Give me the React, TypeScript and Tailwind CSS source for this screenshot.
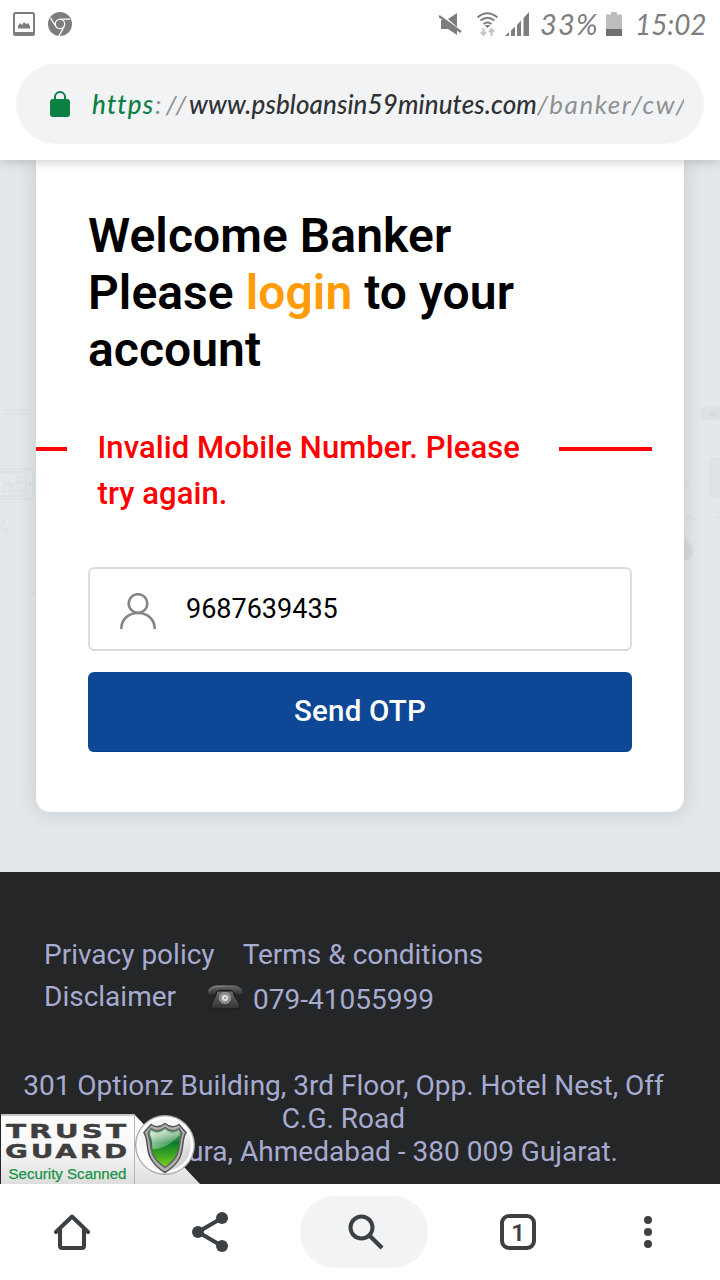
const roboto = "font-['Roboto',sans-serif]";

function StatusBar() {
  return (
    <div className="flex h-12 shrink-0 items-center pl-[13px] text-[#7d7d7d]">
      <svg className="h-6 w-[22px]" viewBox="0 0 22 24" fill="none">
        <rect x="1" y="1" width="20" height="22" rx="1.5" stroke="currentColor" strokeWidth="2" />
        <path d="M2 21.5h18" stroke="currentColor" strokeWidth="3" />
        <path d="M5 16.500V14l2-3 2 2 2-3 2 2 2-1 2 3v2.500z" fill="currentColor" />
      </svg>
      <svg className="ml-[13px] h-6 w-6" viewBox="0 0 24 24">
        <circle cx="12" cy="12" r="12" fill="currentColor" />
        <circle cx="12" cy="12" r="4.7" fill="currentColor" stroke="white" strokeWidth="1.3" />
        <path d="M12 7.2h10M7.9 14.5 2.4 5.8M16 14.6 11 24" stroke="white" strokeWidth="1.3" />
      </svg>
      <div className="flex-1" />
      <svg className="h-6 w-[26px]" viewBox="0 0 26 24" fill="currentColor">
        <path d="M9 7 18 1v14zM2 8h5l11 8v7l-9-6H2z" />
        <path d="m0 4 22 16" stroke="currentColor" strokeWidth="2.4" />
      </svg>
      <svg className="ml-[11px] h-6 w-6" viewBox="0 0 24 24" fill="none">
        <path d="M1.5 5.5Q11 -3 21.500 5.500M4.500 8.500q7-5.500 14 0M7.500 12q4-3 8 0" stroke="currentColor" strokeWidth="2" />
        <path d="m8.500 13 3 3 3-3z" fill="currentColor" />
        <path d="M7.5 16v7m-2.5-3 2.5 3 2.5-3M15.500 24v-7m-2.5 3 2.5-3 2.5 3" stroke="#c5c5c5" strokeWidth="2" />
      </svg>
      <svg className="ml-[5px] h-6 w-6" viewBox="0 0 24 24" fill="currentColor">
        <path d="M0 24 4 20v4zM6 18.500l4-4V24H6zM12 13l4-4.500V24h-4zM18.500 6 24 0v24h-5.500z" />
      </svg>
      <span className="ml-[11px] w-[60px] whitespace-nowrap font-['Lato',sans-serif] text-[29px] leading-6 tracking-[1.2px] italic">33%</span>
      <svg className="ml-[6px] h-6 w-4" viewBox="0 0 16 24">
        <path d="M0 2.5h5V0h6v2.5h5V17H0z" fill="#bdbdbd" />
        <path d="M0 17h16v7H0z" fill="#6f6f6f" />
      </svg>
      <span className="ml-[13px] w-[85px] whitespace-nowrap font-['Lato',sans-serif] text-[28px] leading-6 tracking-[-0.1px] italic">15:02</span>
    </div>
  );
}

function AddressBar() {
  return (
    <div className="mx-4 mt-4 flex h-20 shrink-0 items-center rounded-full bg-[#f1f3f5] pl-[34px]">
      <svg className="h-[26px] w-5 text-[#0b8043]" viewBox="0 0 20 26">
        <rect y="8" width="20" height="18" rx="3" fill="currentColor" />
        <path d="M5 9V6a5 5 0 0 1 10 0V9" fill="none" stroke="currentColor" strokeWidth="2" />
      </svg>
      <div className="ml-[22px] flex w-[592px] overflow-hidden whitespace-nowrap font-['Lato',sans-serif] text-[26px] leading-8 italic">
        <span className="w-[63px] shrink-0 font-medium tracking-[1.2px] text-[#0b8043]">https</span>
        <span className="w-[34px] shrink-0 tracking-[4.2px] text-[#909193]">://</span>
        <span className="w-[348px] shrink-0 font-medium tracking-[0.1px] text-[#303133]">www.psbloansin59minutes.com</span>
        <span className="shrink-0 tracking-[1.5px] text-[#909193]">/banker/cw/</span>
      </div>
    </div>
  );
}

function Backdrop() {
  return (
    <svg className="absolute inset-0 h-[712px] w-[720px]" viewBox="0 160 720 712" fill="none" stroke="#dbe0e4" strokeWidth="1.3">
      <path d="M6 410h25M3 413.500h33M31 594h5M716 517h4" />
      <rect x="-8" y="469" width="41" height="30" rx="3" />
      <path d="M0 472h26v24H0M2 488l5-5 5 4 6-6 6 3M2 491h22M4 480v9M10 478v11M18 476v13" />
      <circle cx="29.500" cy="484.500" r="1" />
      <path d="m-3 532 9-13" />
      <circle cx="5" cy="530" r="2.500" />
      <rect x="702" y="408" width="22" height="11" fill="#dce1e4" />
      <circle cx="713" cy="413.500" r="4" fill="#d5dce0" />
      <rect x="710" y="459" width="16" height="37" fill="#dde3e6" />
      <path d="M715 484h5M715 488h5M715 491h5" />
      <circle cx="721" cy="472" r="3.500" />
      <circle cx="686" cy="484" r="2" />
      <circle cx="689" cy="518.500" r="2.500" />
      <circle cx="683" cy="551" r="10" fill="#d5dce0" />
      <path d="m685 541 2-4" strokeWidth="3" />
    </svg>
  );
}

function LoginCard() {
  return (
    <main className="relative h-[712px] shrink-0 overflow-hidden bg-[#e4e8eb] px-9">
      <Backdrop />
      <section className="relative h-[652px] rounded-b-[14px] bg-white pt-[47px] shadow-[0_0_20px_rgba(60,75,90,0.2)]">
        <h1 className="ml-[52px] text-[48px] leading-[57px] font-semibold tracking-[0.06px] whitespace-nowrap text-black">
          Welcome Banker<br />Please <span className="text-[#ff9c09]">login</span> to your<br />account
        </h1>
        <div className="mt-[47px] flex h-[91px] items-start text-[31px] leading-[46px] font-medium tracking-[0.08px] text-[#ff0000]">
          <span className="mt-[22px] h-1 w-[31px] bg-[#ff0000]" />
          <p className="ml-[30.5px] w-[461.5px] whitespace-nowrap">Invalid Mobile Number. Please<br />try again.</p>
          <span className="mt-[22px] h-1 w-[93px] bg-[#ff0000]" />
        </div>
        <div className="mx-[52px] mt-[51px] flex h-[84px] items-center rounded-md border-2 border-[#dcdcdc] pl-[30px]">
          <svg className="mt-[3px] h-9 w-9" viewBox="0 0 36 36" fill="none" stroke="#858585" strokeWidth="2.6">
            <circle cx="18" cy="10.500" r="9.300" />
            <path d="M1.300 36c0-9.800 7.500-16 16.700-16s16.700 6.200 16.700 16" />
          </svg>
          <span className="ml-[30px] text-[27px] text-black">9687639435</span>
        </div>
        <button className="mx-[52px] mt-[21px] flex h-20 w-[544px] items-center justify-center rounded-md border-b border-[#093f89] bg-[#0d4796] text-[29.5px] font-medium tracking-[0.2px] text-white">Send OTP</button>
      </section>
    </main>
  );
}

function Telephone() {
  return (
    <svg className="ml-[31px] h-[27px] w-9" viewBox="0 0 36 27">
      <defs><linearGradient id="phone" x2="0" y2="1"><stop stopColor="#707070" /><stop offset=".5" stopColor="#4d4d4d" /><stop offset="1" stopColor="#303030" /></linearGradient></defs>
      <path d="M10 7h16c1 8 7 9 7 18H4c0-9 5-10 6-18z" fill="url(#phone)" stroke="#191919" />
      <path d="M0 10C0 3 6 1 11 1h14c5 0 11 2 11 9-4 2-8 1-9-2l-3-2H12L9 8c-1 3-5 4-9 2z" fill="url(#phone)" stroke="#202020" strokeWidth=".5" />
      <path d="M2 7C5 2 10 3 18 2" fill="none" stroke="#858585" />
      <circle cx="18" cy="14" r="6" fill="#a0a0a0" />
      <circle cx="18" cy="14" r="4.600" fill="none" stroke="#777" strokeWidth="1.200" strokeDasharray="1.500 1" />
      <circle cx="18" cy="14" r="3" fill="#ddd" />
      <circle cx="18" cy="14" r="1" fill="#888" />
    </svg>
  );
}

function TrustBadge() {
  return (
    <svg className="absolute bottom-0 left-0 h-[72px] w-[202px]" viewBox="0 0 202 72">
      <defs>
        <linearGradient id="panel" x2="0" y2="1"><stop stopColor="#fff" /><stop offset=".55" stopColor="#f6f6f6" /><stop offset="1" stopColor="#dedede" /></linearGradient>
        <linearGradient id="rim" x2="1" y2="1"><stop stopColor="#e9e9e9" /><stop offset=".5" stopColor="#fff" /><stop offset="1" stopColor="#bbb" /></linearGradient>
        <linearGradient id="green" x2="0" y2="1"><stop stopColor="#8eb991" /><stop offset=".38" stopColor="#087b28" /><stop offset="1" stopColor="#79d321" /></linearGradient>
        <linearGradient id="gloss" x2="1" y2="1"><stop stopColor="white" stopOpacity=".85" /><stop offset="1" stopColor="white" stopOpacity="0" /></linearGradient>
      </defs>
      <path d="M1 2h133l66 70H1z" fill="url(#panel)" />
      <path d="M1 3h134" stroke="#c5c5c5" strokeWidth="2" />
      <path d="M134.500 2v70" stroke="#b5b5b5" />
      <g fill="#3e3e3e" stroke="#3e3e3e" strokeWidth=".4" fontFamily="DejaVu Sans" fontWeight="700" fontSize="20" letterSpacing="2">
        <text x="6" y="25.500" textLength="123" lengthAdjust="spacingAndGlyphs">TRUST</text>
        <text x="5" y="46" textLength="125" lengthAdjust="spacingAndGlyphs">GUARD</text>
      </g>
      <text x="8.500" y="66.500" textLength="118" lengthAdjust="spacingAndGlyphs" fill="#169447" stroke="#169447" strokeWidth=".25" fontFamily="Liberation Sans" fontSize="15">Security Scanned</text>
      <g transform="translate(0 1.500)">
        <circle cx="165" cy="31.500" r="29.500" fill="#d6d6d6" stroke="#a2a2a2" />
        <circle cx="165" cy="31.500" r="27" fill="url(#rim)" stroke="#fff" strokeWidth="2.500" />
        <path d="M165 10c-5 4-10 4-14 1l-7 8c7 11-3 25 21 40 24-15 14-29 21-40l-7-8c-4 3-9 3-14-1z" fill="#b1b1b1" stroke="#555" strokeWidth="1.500" />
        <path d="M165 14c-5 4-10 4-14 1l-3 5c5 11-2 21 17 34 19-13 12-23 17-34l-3-5c-4 3-9 3-14-1z" fill="url(#green)" stroke="#626262" strokeWidth="1.500" />
        <path d="M165 16c-5 4-10 4-14 1l-1 4c3 7 1 9 3 15 11-1 20-7 27-15l-1-4c-4 3-9 3-14-1z" fill="url(#gloss)" />
      </g>
    </svg>
  );
}

function Footer() {
  return (
    <footer className="relative h-[312px] shrink-0 overflow-hidden bg-[#242628] pt-[62px] text-[#a7abcf]">
      <div className="ml-11 flex h-[42px] items-center gap-[28px] whitespace-nowrap text-[28px]"><span>Privacy policy</span><span>Terms &amp; conditions</span></div>
      <div className="ml-11 flex h-[42px] items-center whitespace-nowrap text-[28px]">
        <span>Disclaimer</span><Telephone /><span className="ml-[10px] mt-[5px]">079-41055999</span>
      </div>
      <address className="mt-[51px] w-[687px] text-center text-[28px] leading-[33px] whitespace-nowrap not-italic">
        <p>301 Optionz Building, 3rd Floor, Opp. Hotel Nest, Off</p>
        <p>C.G. Road</p>
        <p className="pr-[69px] text-right">ura, Ahmedabad - 380 009 Gujarat.</p>
      </address>
      <TrustBadge />
    </footer>
  );
}

function Navigation() {
  return (
    <nav className="flex h-24 shrink-0 items-center bg-white text-[#3c4043]">
      <div className="flex w-36 justify-center">
        <svg className="h-9 w-9" viewBox="0 0 36 36" fill="none" stroke="currentColor" strokeWidth="4"><path d="M2 18 18 2.500 34 18M6 16v16q0 2 2 2h20q2 0 2-2V16" strokeLinejoin="round" strokeLinecap="round" /></svg>
      </div>
      <div className="flex w-[132px] justify-center">
        <svg className="h-10 w-9" viewBox="0 0 36 40" fill="currentColor"><path d="m6 20 24-14M6 20l24 14" stroke="currentColor" strokeWidth="4" /><circle cx="6" cy="20" r="6" /><circle cx="30" cy="6" r="6" /><circle cx="30" cy="34" r="6" /></svg>
      </div>
      <div className="ml-6 flex h-[72px] w-32 items-center justify-center rounded-full bg-[#f1f3f5]">
        <svg className="ml-[3px] h-9 w-9" viewBox="0 0 36 36" fill="none" stroke="currentColor"><circle cx="13.500" cy="13.500" r="11" strokeWidth="4" /><path d="m22 22 12 12" strokeWidth="4.200" /></svg>
      </div>
      <div className="ml-[72px] flex h-9 w-9 items-center justify-center rounded-[9px] border-4 border-[#3c4043] pt-px text-[24px] leading-none font-semibold">1</div>
      <div className="ml-[108px] flex w-2 flex-col items-center gap-1">
        <span className="h-2 w-2 rounded-full bg-[#3c4043]" /><span className="h-2 w-2 rounded-full bg-[#3c4043]" /><span className="h-2 w-2 rounded-full bg-[#3c4043]" />
      </div>
    </nav>
  );
}

export default function App() {
  return (
    <div className={`${roboto} flex h-[1280px] w-[720px] flex-col overflow-hidden bg-white`}>
      <header className="relative z-10 flex h-40 shrink-0 flex-col bg-white shadow-[0_0_12px_rgba(0,0,0,0.25)]"><StatusBar /><AddressBar /></header>
      <LoginCard />
      <Footer />
      <Navigation />
    </div>
  );
}
